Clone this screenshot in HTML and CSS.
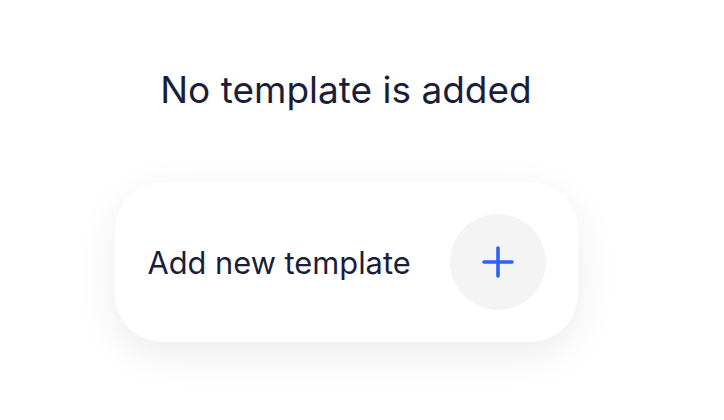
FILE: index.html
```html
<!DOCTYPE html>
<html>
<head>
<meta charset="utf-8">
<link rel="stylesheet" href="styles.css">
</head>
<body>
<main class="empty">
  <h1 class="empty-title">No template is added</h1>
  <button class="add-card" type="button">
    <span class="add-label">Add new template</span>
    <span class="add-icon">
      <svg width="32" height="32" viewBox="0 0 32 32" fill="none">
        <path d="M16 2v28M2 16h28" stroke="#2D62F6" stroke-width="3.6" stroke-linecap="round"/>
      </svg>
    </span>
  </button>
</main>
</body>
</html>
```
FILE: styles.css
```css
html, body {
  margin: 0;
  padding: 0;
  background: #ffffff;
}
body {
  font-family: Inter, "Noto Sans", sans-serif;
  color: #1b1e3b;
  width: 692px;
  min-height: 420px;
}
.empty {
  display: flex;
  flex-direction: column;
  align-items: center;
  padding-top: 68px;
  padding-bottom: 60px;
}
.empty-title {
  margin: 0;
  font-size: 37px;
  font-weight: 400;
  line-height: 44px;
}
.add-card {
  margin-top: 70px;
  box-sizing: border-box;
  width: 463px;
  height: 160px;
  border: none;
  border-radius: 48px;
  background: #ffffff;
  box-shadow: 0 12px 40px rgba(0, 0, 0, 0.08);
  display: flex;
  align-items: center;
  justify-content: space-between;
  padding: 0 32px 0 33px;
  font-family: inherit;
  color: inherit;
}
.add-label {
  font-size: 30.8px;
  font-weight: 400;
}
.add-icon {
  width: 96px;
  height: 96px;
  border-radius: 50%;
  background: #f4f4f5;
  display: flex;
  align-items: center;
  justify-content: center;
}
```
